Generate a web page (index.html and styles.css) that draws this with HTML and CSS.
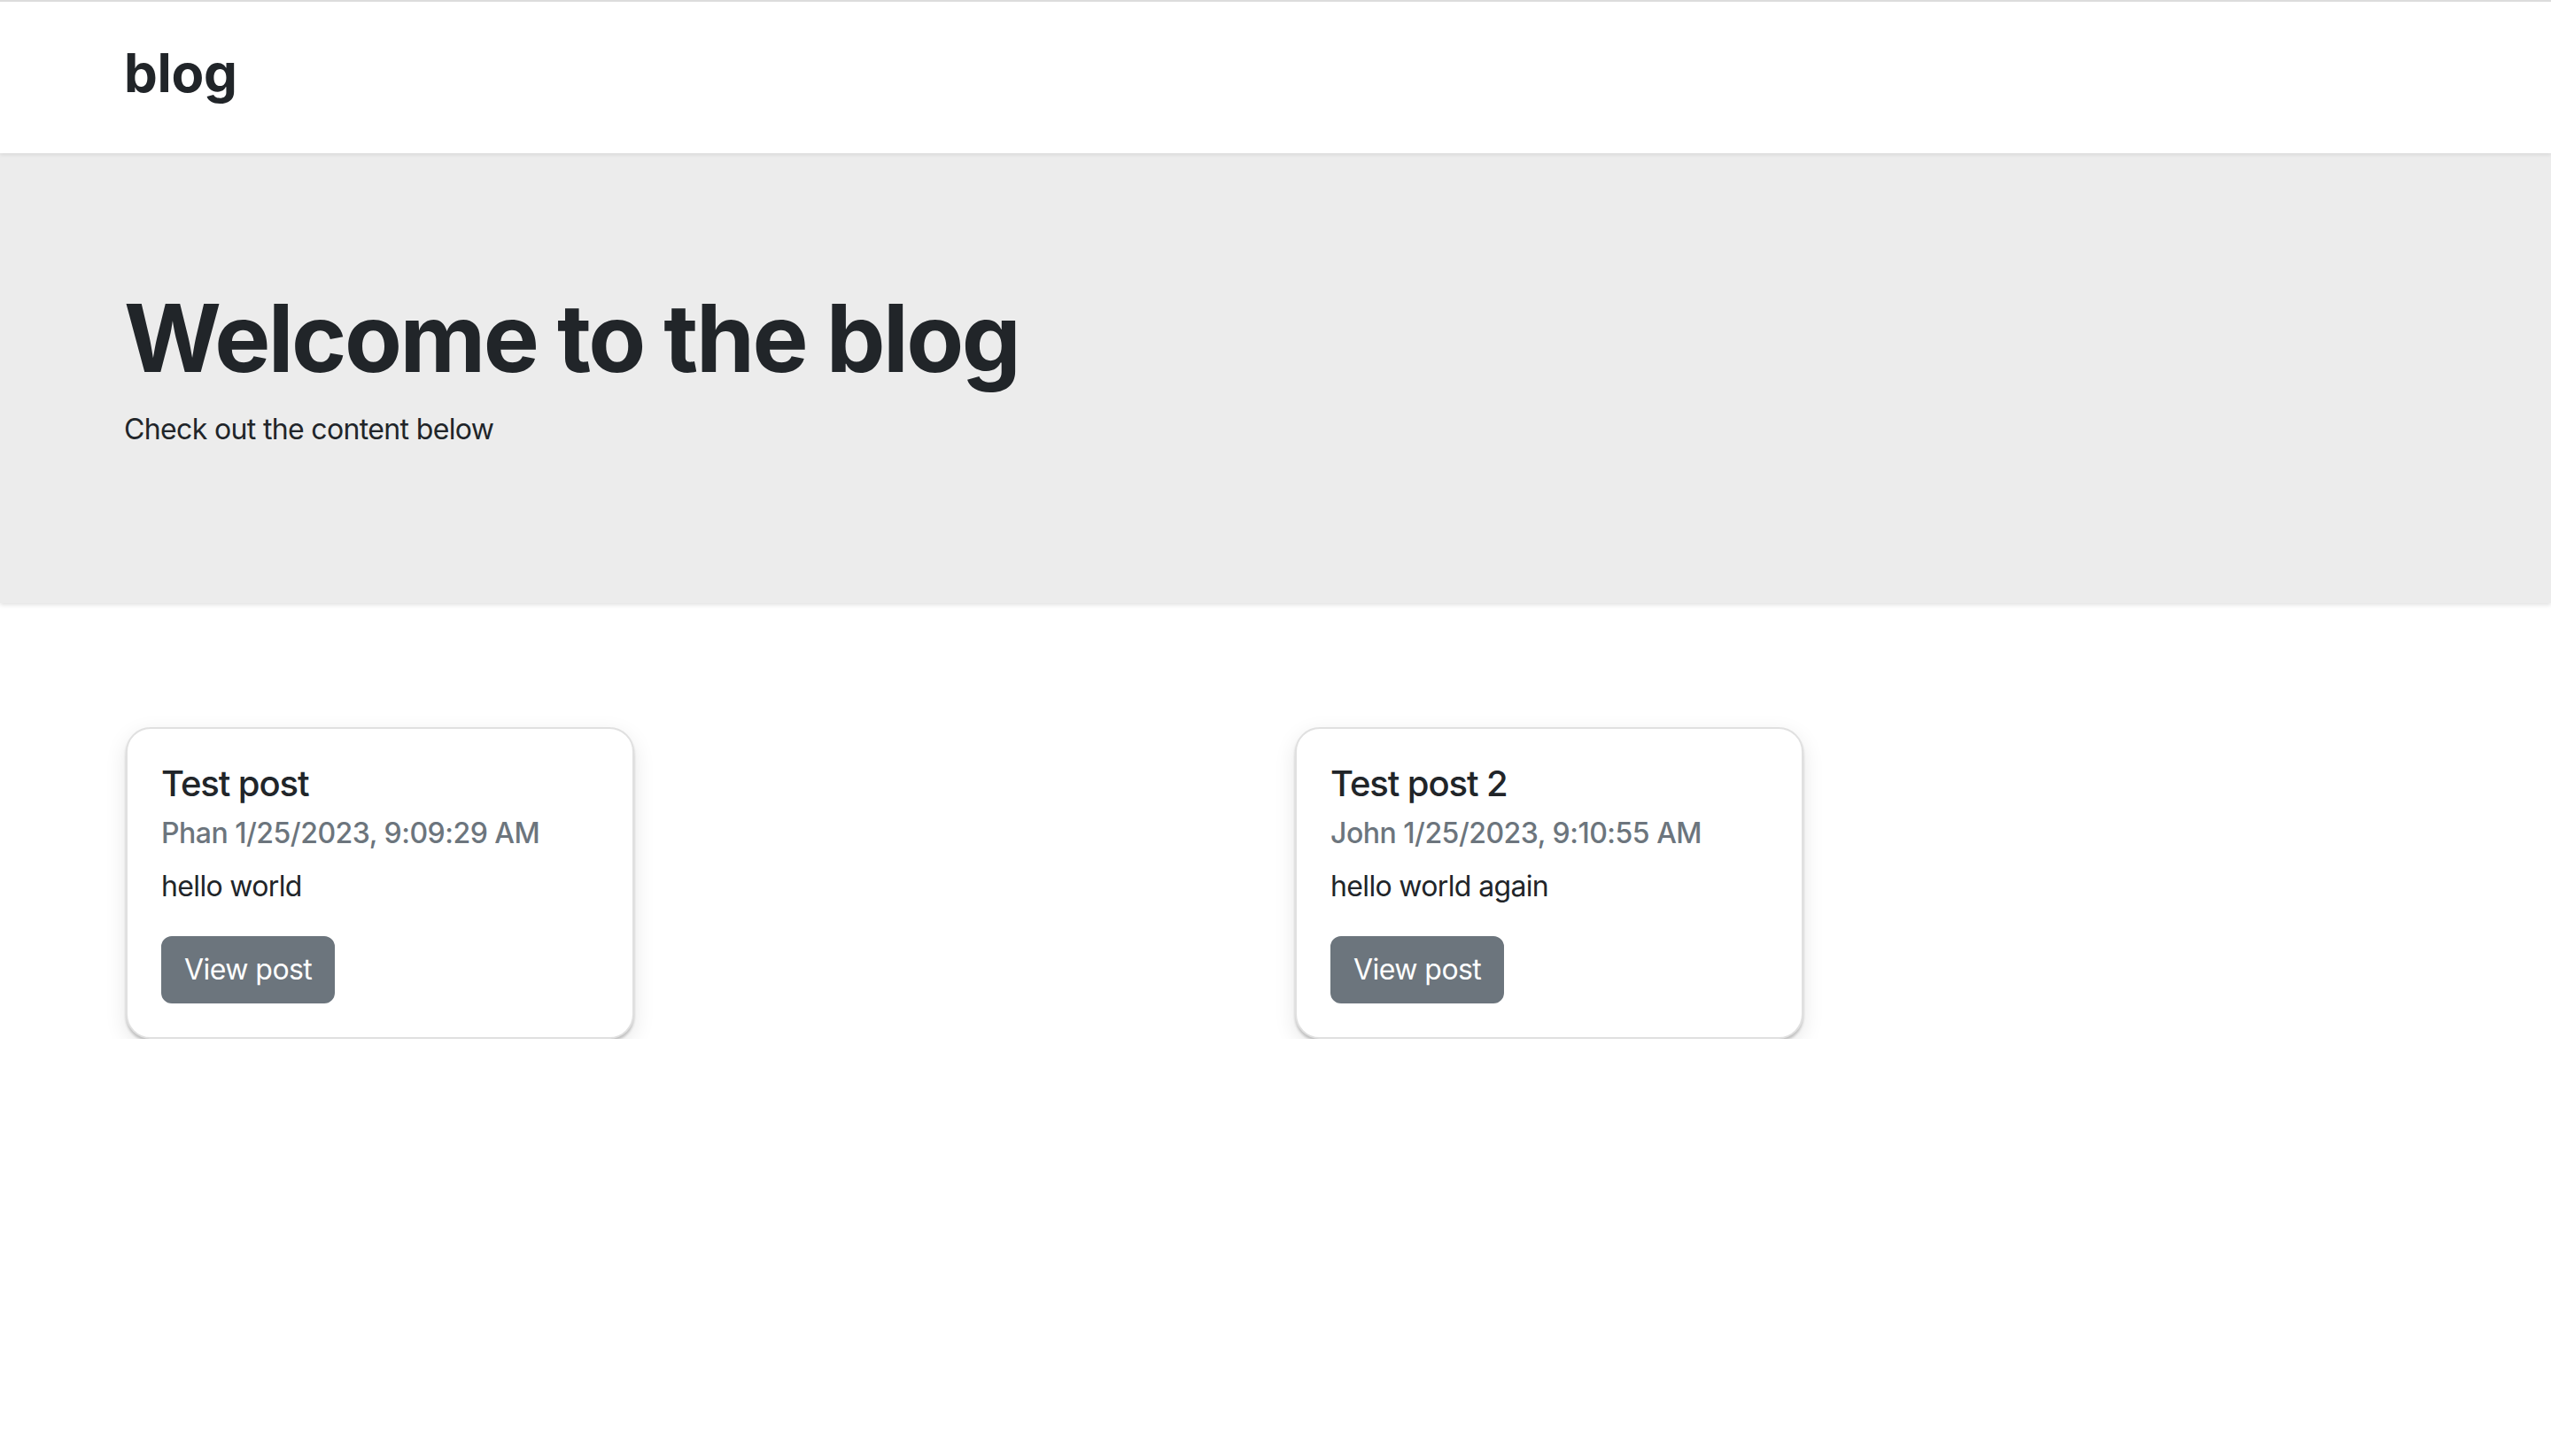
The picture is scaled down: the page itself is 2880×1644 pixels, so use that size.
FILE: index.html
```html
<!DOCTYPE html>
<html lang="en">
<head>
<meta charset="utf-8">
<title>blog</title>
<link rel="stylesheet" href="styles.css">
</head>
<body>
<header class="navbar">
  <div class="container">
    <a class="brand" href="#">blog</a>
  </div>
</header>
<section class="hero">
  <div class="container">
    <h1 class="hero-title">Welcome to the blog</h1>
    <p class="hero-lead">Check out the content below</p>
  </div>
</section>
<main class="container posts">
  <div class="col">
    <div class="card">
      <h5 class="card-title">Test post</h5>
      <h6 class="card-subtitle">Phan 1/25/2023, 9:09:29 AM</h6>
      <p class="card-text">hello world</p>
      <a class="btn" href="#">View post</a>
    </div>
  </div>
  <div class="col">
    <div class="card">
      <h5 class="card-title">Test post 2</h5>
      <h6 class="card-subtitle">John 1/25/2023, 9:10:55 AM</h6>
      <p class="card-text">hello world again</p>
      <a class="btn" href="#">View post</a>
    </div>
  </div>
</main>
</body>
</html>
```
FILE: styles.css
```css
* { box-sizing: border-box; }
html, body { margin: 0; padding: 0; }
body {
  font-family: Inter, "Noto Sans", "Liberation Sans", sans-serif;
  font-size: 32px;
  line-height: 1.5;
  letter-spacing: -0.65px;
  color: #212529;
  background: #fff;
}
.container {
  padding-left: 140px;
  padding-right: 140px;
}
.navbar {
  border-top: 2px solid #dcdcdc;
  background: #fff;
  padding: 44px 0 54px;
  position: relative;
  z-index: 2;
  box-shadow: 0 2px 4px rgba(0,0,0,0.08);
}
.brand {
  display: inline-block;
  font-size: 60px;
  font-weight: 700;
  line-height: 1.21;
  color: #212529;
  text-decoration: none;
  letter-spacing: -0.3px;
}
.hero {
  background: #ececec;
  padding: 145px 0 140px;
  position: relative;
  z-index: 1;
  box-shadow: 0 2px 5px rgba(0,0,0,0.12);
}
.hero-title {
  margin: 0 0 16px;
  font-size: 106px;
  font-weight: 700;
  line-height: 1.2;
  letter-spacing: -2.5px;
}
.hero-lead {
  margin: 0 0 32px;
  font-size: 32px;
  line-height: 1.5;
}
.posts {
  margin-top: 140px;
  padding-left: 142px;
  display: grid;
  grid-template-columns: 1296px 1296px;
  column-gap: 24px;
}
.card {
  width: 574px;
  background: #fff;
  border: 2px solid #e0e0e0;
  border-radius: 28px;
  padding: 38px;
  box-shadow: 0 3px 3px rgba(0,0,0,0.2), 0 8px 24px rgba(0,0,0,0.1);
}
.card-title {
  margin: 0 0 16px;
  font-size: 40px;
  font-weight: 500;
  line-height: 1.2;
  letter-spacing: -1.1px;
}
.card-subtitle {
  margin: -8px 0 12px;
  font-size: 32px;
  font-weight: 500;
  line-height: 1.5;
  letter-spacing: -0.5px;
  color: #6c757d;
}
.card-text {
  margin: 0 0 32px;
}
.btn {
  display: inline-block;
  background: #6c757d;
  border: 2px solid #6c757d;
  color: #fff;
  text-decoration: none;
  font-size: 32px;
  line-height: 1.5;
  padding: 12px 24px;
  border-radius: 12px;
  letter-spacing: -0.55px;
}
```
